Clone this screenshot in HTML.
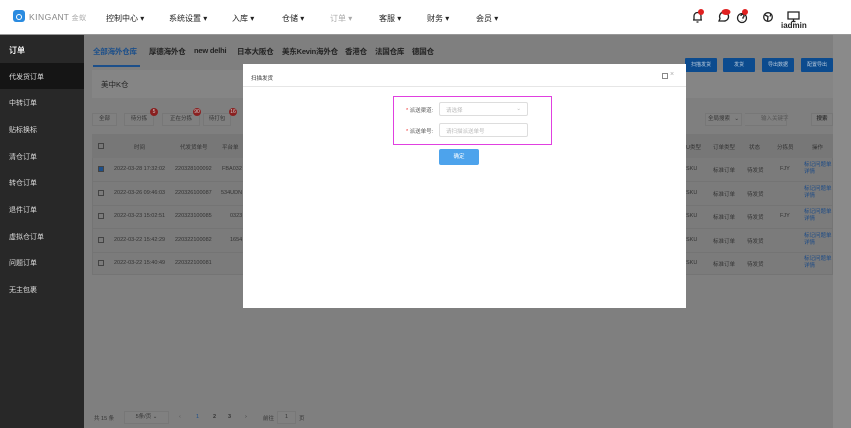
<!DOCTYPE html>
<html><head><meta charset="utf-8"><style>
*{margin:0;padding:0;box-sizing:border-box}
body{width:851px;height:428px;overflow:hidden;position:relative;background:#7f7f7f;font-family:"Liberation Sans","Noto Sans CJK SC",sans-serif;color:#333}
.a{position:absolute;white-space:nowrap}
.hdr{left:0;top:0;width:851px;height:35px;background:#fff;border-bottom:1px solid #999}
.nav{top:13px;font-size:8px;color:#222}
.side{left:0;top:35px;width:84px;height:393px;background:#282828}
.si{left:9px;font-size:7px;color:#ddd}
.tab{top:46px;font-size:7.5px;font-weight:bold;color:#222;letter-spacing:-0.2px}
.btn{top:58px;height:14px;width:32px;background:#0c4b8e;border-radius:1px;color:#bcd;font-size:5px;text-align:center;line-height:14px}
.fb{top:113px;height:13px;border:1px solid #777;background:#808080;font-size:5.5px;color:#333;text-align:center;line-height:11px}
.badge{height:8px;min-width:8px;border-radius:4px;background:#8a2020;color:#ccc;font-size:5px;text-align:center;line-height:8px;padding:0 1px}
.td{font-size:5.5px;color:#333}
.cb{width:6px;height:6px;border:1px solid #444}
.lnk{font-size:5.5px;color:#1d4b86;line-height:7px}
.row{left:92px;width:741px;height:1px;background:#747474}
</style></head><body>
<div class="a hdr"></div>
<div class="a" style="left:13px;top:10px;width:12px;height:12px;border-radius:3px;background:#2a8be0"></div>
<div class="a" style="left:16px;top:14px;width:6px;height:6px;border-radius:50%;border:1.5px solid #fff"></div>
<div class="a" style="left:29px;top:12px;font-size:8.5px;color:#888;letter-spacing:.5px">KING<span style="letter-spacing:0">ANT</span> <span style="font-size:7px;color:#aaa">金蚁</span></div>
<div class="a nav" style="left:106px">控制中心 ▾</div>
<div class="a nav" style="left:169px">系统设置 ▾</div>
<div class="a nav" style="left:232px">入库 ▾</div>
<div class="a nav" style="left:282px">仓储 ▾</div>
<div class="a nav" style="left:330px;color:#aaa">订单 ▾</div>
<div class="a nav" style="left:379px">客服 ▾</div>
<div class="a nav" style="left:427px">财务 ▾</div>
<div class="a nav" style="left:476px">会员 ▾</div>
<svg class="a" style="left:690px;top:8px" width="120" height="16" viewBox="0 0 120 16" fill="none" stroke="#222" stroke-width="1.3">
<path d="M4 12V8a3.5 3.5 0 017 0v4H3h9M6.5 14h2"/><circle cx="11" cy="4" r="3" fill="#e02020" stroke="none"/>
<path d="M29 13l1-2.5a4.5 4.5 0 113.5 2.5z"/><ellipse cx="36" cy="4" rx="4.5" ry="3" fill="#e02020" stroke="none"/>
<circle cx="52" cy="10" r="4.5"/><path d="M51 8a1.5 1.5 0 112 1.3v1.5M52 12.5v.3"/><circle cx="55" cy="4" r="3" fill="#e02020" stroke="none"/>
<circle cx="78" cy="9" r="4.3"/><path d="M75 7l3 1.5-.5 4M81 5.5l-1 3"/>
<path d="M98 4h11v7H98zM101.5 13.5h4M103.5 11v2.5"/>
</svg>
<div class="a" style="left:781px;top:21px;font-size:8px;font-weight:bold;color:#222">iadmin</div>
<div class="a side"></div>
<div class="a" style="left:0;top:63px;width:84px;height:26px;background:#151515"></div>
<div class="a si" style="top:45px;font-size:8px;font-weight:bold;color:#eee">订单</div>
<div class="a si" style="top:72px">代发货订单</div>
<div class="a si" style="top:98px">中转订单</div>
<div class="a si" style="top:125px">贴标换标</div>
<div class="a si" style="top:152px">清仓订单</div>
<div class="a si" style="top:178px">转仓订单</div>
<div class="a si" style="top:205px">退件订单</div>
<div class="a si" style="top:232px">虚拟仓订单</div>
<div class="a si" style="top:258px">问题订单</div>
<div class="a si" style="top:285px">无主包裹</div>
<div class="a" style="left:833px;top:35px;width:18px;height:393px;background:#8a8a8a"></div>
<div class="a tab" style="left:93px;color:#1c4f8a">全部海外仓库</div>
<div class="a tab" style="left:149px">厚德海外仓</div>
<div class="a tab" style="left:194px">new delhi</div>
<div class="a tab" style="left:237px">日本大阪仓</div>
<div class="a tab" style="left:282px">美东Kevin海外仓</div>
<div class="a tab" style="left:345px">香港仓</div>
<div class="a tab" style="left:375px">法国仓库</div>
<div class="a tab" style="left:412px">德国仓</div>
<div class="a" style="left:93px;top:65px;width:47px;height:1.5px;background:#1c4f8a"></div>
<div class="a" style="left:92px;top:70px;width:741px;height:28px;background:#858585"></div>
<div class="a" style="left:101px;top:79px;font-size:7.5px;color:#222">美中K仓</div>
<div class="a btn" style="left:685px">扫描发货</div>
<div class="a btn" style="left:723px">发货</div>
<div class="a btn" style="left:762px">导出数据</div>
<div class="a btn" style="left:801px">配置导出</div>
<div class="a fb" style="left:92px;width:25px">全部</div>
<div class="a fb" style="left:124px;width:30px">待分拣</div>
<div class="a badge" style="left:150px;top:108px">5</div>
<div class="a fb" style="left:162px;width:38px">正在分拣</div>
<div class="a badge" style="left:193px;top:108px">90</div>
<div class="a fb" style="left:203px;width:28px">待打包</div>
<div class="a badge" style="left:229px;top:108px">16</div>
<div class="a fb" style="left:705px;width:37px;text-align:left;padding-left:2px">全局搜索 <span style="float:right;margin-right:2px">⌄</span></div>
<div class="a fb" style="left:745px;width:42px;color:#555;text-align:left;padding-left:16px;border-left:none">输入关键字</div>
<div class="a fb" style="left:811px;width:22px;font-weight:bold">搜索</div>
<div class="a" style="left:92px;top:134px;width:741px;height:141px;background:#7b7b7b;border:1px solid #747474"></div>
<div class="a" style="left:92px;top:134px;width:741px;height:24px;background:#777"></div>
<div class="a row" style="top:181px"></div><div class="a row" style="top:205px"></div><div class="a row" style="top:228px"></div><div class="a row" style="top:252px"></div>
<div class="a cb" style="left:98px;top:143px"></div>
<div class="a td" style="left:134px;top:143px">时间</div>
<div class="a td" style="left:180px;top:143px">代发货单号</div>
<div class="a td" style="left:222px;top:143px">平台单</div>
<div class="a td" style="left:686px;top:143px">U类型</div><div class="a td" style="left:713px;top:143px">订单类型</div><div class="a td" style="left:749px;top:143px">状态</div><div class="a td" style="left:777px;top:143px">分拣员</div><div class="a td" style="left:812px;top:143px">操作</div>
<div class="a cb" style="left:98px;top:166px;background:#1c4f8a"></div>
<div class="a td" style="left:114px;top:166px">2022-03-28 17:32:02</div><div class="a td" style="left:175px;top:166px">220328100092</div><div class="a td" style="left:222px;top:166px">FBA032</div>
<div class="a cb" style="left:98px;top:190px"></div>
<div class="a td" style="left:114px;top:190px">2022-03-26 09:46:03</div><div class="a td" style="left:175px;top:190px">220326100087</div><div class="a td" style="left:221px;top:190px">534UDN</div>
<div class="a cb" style="left:98px;top:213px"></div>
<div class="a td" style="left:114px;top:213px">2022-03-23 15:02:51</div><div class="a td" style="left:175px;top:213px">220323100085</div><div class="a td" style="left:230px;top:213px">0323</div>
<div class="a cb" style="left:98px;top:237px"></div>
<div class="a td" style="left:114px;top:237px">2022-03-22 15:42:29</div><div class="a td" style="left:175px;top:237px">220322100082</div><div class="a td" style="left:230px;top:237px">1654</div>
<div class="a cb" style="left:98px;top:260px"></div>
<div class="a td" style="left:114px;top:260px">2022-03-22 15:40:49</div><div class="a td" style="left:175px;top:260px">220322100081</div>
<div class="a td" style="left:686px;top:166px">SKU</div><div class="a td" style="left:713px;top:166px">标准订单</div><div class="a td" style="left:747px;top:166px">待发货</div><div class="a td" style="left:780px;top:166px">FJY</div>
<div class="a td" style="left:686px;top:190px">SKU</div><div class="a td" style="left:713px;top:190px">标准订单</div><div class="a td" style="left:747px;top:190px">待发货</div>
<div class="a td" style="left:686px;top:213px">SKU</div><div class="a td" style="left:713px;top:213px">标准订单</div><div class="a td" style="left:747px;top:213px">待发货</div><div class="a td" style="left:780px;top:213px">FJY</div>
<div class="a td" style="left:686px;top:237px">SKU</div><div class="a td" style="left:713px;top:237px">标准订单</div><div class="a td" style="left:747px;top:237px">待发货</div>
<div class="a td" style="left:686px;top:260px">SKU</div><div class="a td" style="left:713px;top:260px">标准订单</div><div class="a td" style="left:747px;top:260px">待发货</div>
<div class="a lnk" style="left:804px;top:162px">标记问题单<br>详情</div>
<div class="a lnk" style="left:804px;top:186px">标记问题单<br>详情</div>
<div class="a lnk" style="left:804px;top:209px">标记问题单<br>详情</div>
<div class="a lnk" style="left:804px;top:233px">标记问题单<br>详情</div>
<div class="a lnk" style="left:804px;top:256px">标记问题单<br>详情</div>
<div class="a td" style="left:94px;top:414px">共 15 条</div>
<div class="a fb" style="left:124px;top:411px;width:45px;font-size:5.5px">5条/页 ⌄</div>
<div class="a td" style="left:179px;top:414px;color:#555">‹</div>
<div class="a td" style="left:196px;top:414px;color:#1c4f8a">1</div>
<div class="a td" style="left:213px;top:414px;font-weight:bold">2</div>
<div class="a td" style="left:228px;top:414px;font-weight:bold">3</div>
<div class="a td" style="left:245px;top:414px">›</div>
<div class="a td" style="left:263px;top:414px">前往</div>
<div class="a fb" style="left:277px;top:411px;width:19px">1</div>
<div class="a td" style="left:299px;top:414px">页</div>
<div class="a" style="left:243px;top:64px;width:443px;height:244px;background:#fff"></div>
<div class="a" style="left:251px;top:74px;font-size:5.5px;color:#333">扫描发货</div>
<div class="a" style="left:243px;top:86px;width:443px;height:1px;background:#e6e6e6"></div>
<div class="a" style="left:662px;top:73px;width:6px;height:6px;border:1px solid #888"></div>
<div class="a" style="left:670px;top:71px;font-size:7px;color:#aaa">×</div>
<div class="a" style="left:393px;top:96px;width:159px;height:49px;border:1.5px solid #e040e0"></div>
<div class="a" style="left:406px;top:106px;font-size:5.5px;color:#555"><span style="color:#e33">*</span> 派送渠道:</div>
<div class="a" style="left:439px;top:102px;width:89px;height:14px;border:1px solid #ddd;border-radius:2px;font-size:5.5px;color:#bbb;padding:3px 6px">请选择<span style="float:right">⌄</span></div>
<div class="a" style="left:406px;top:127px;font-size:5.5px;color:#555"><span style="color:#e33">*</span> 派送单号:</div>
<div class="a" style="left:439px;top:123px;width:89px;height:14px;border:1px solid #ddd;border-radius:2px;font-size:5.5px;color:#bbb;padding:3px 6px">请扫描派送单号</div>
<div class="a" style="left:439px;top:149px;width:40px;height:16px;background:#4da3ec;border-radius:2px;color:#fff;font-size:5.5px;text-align:center;line-height:16px">确定</div>
</body></html>
